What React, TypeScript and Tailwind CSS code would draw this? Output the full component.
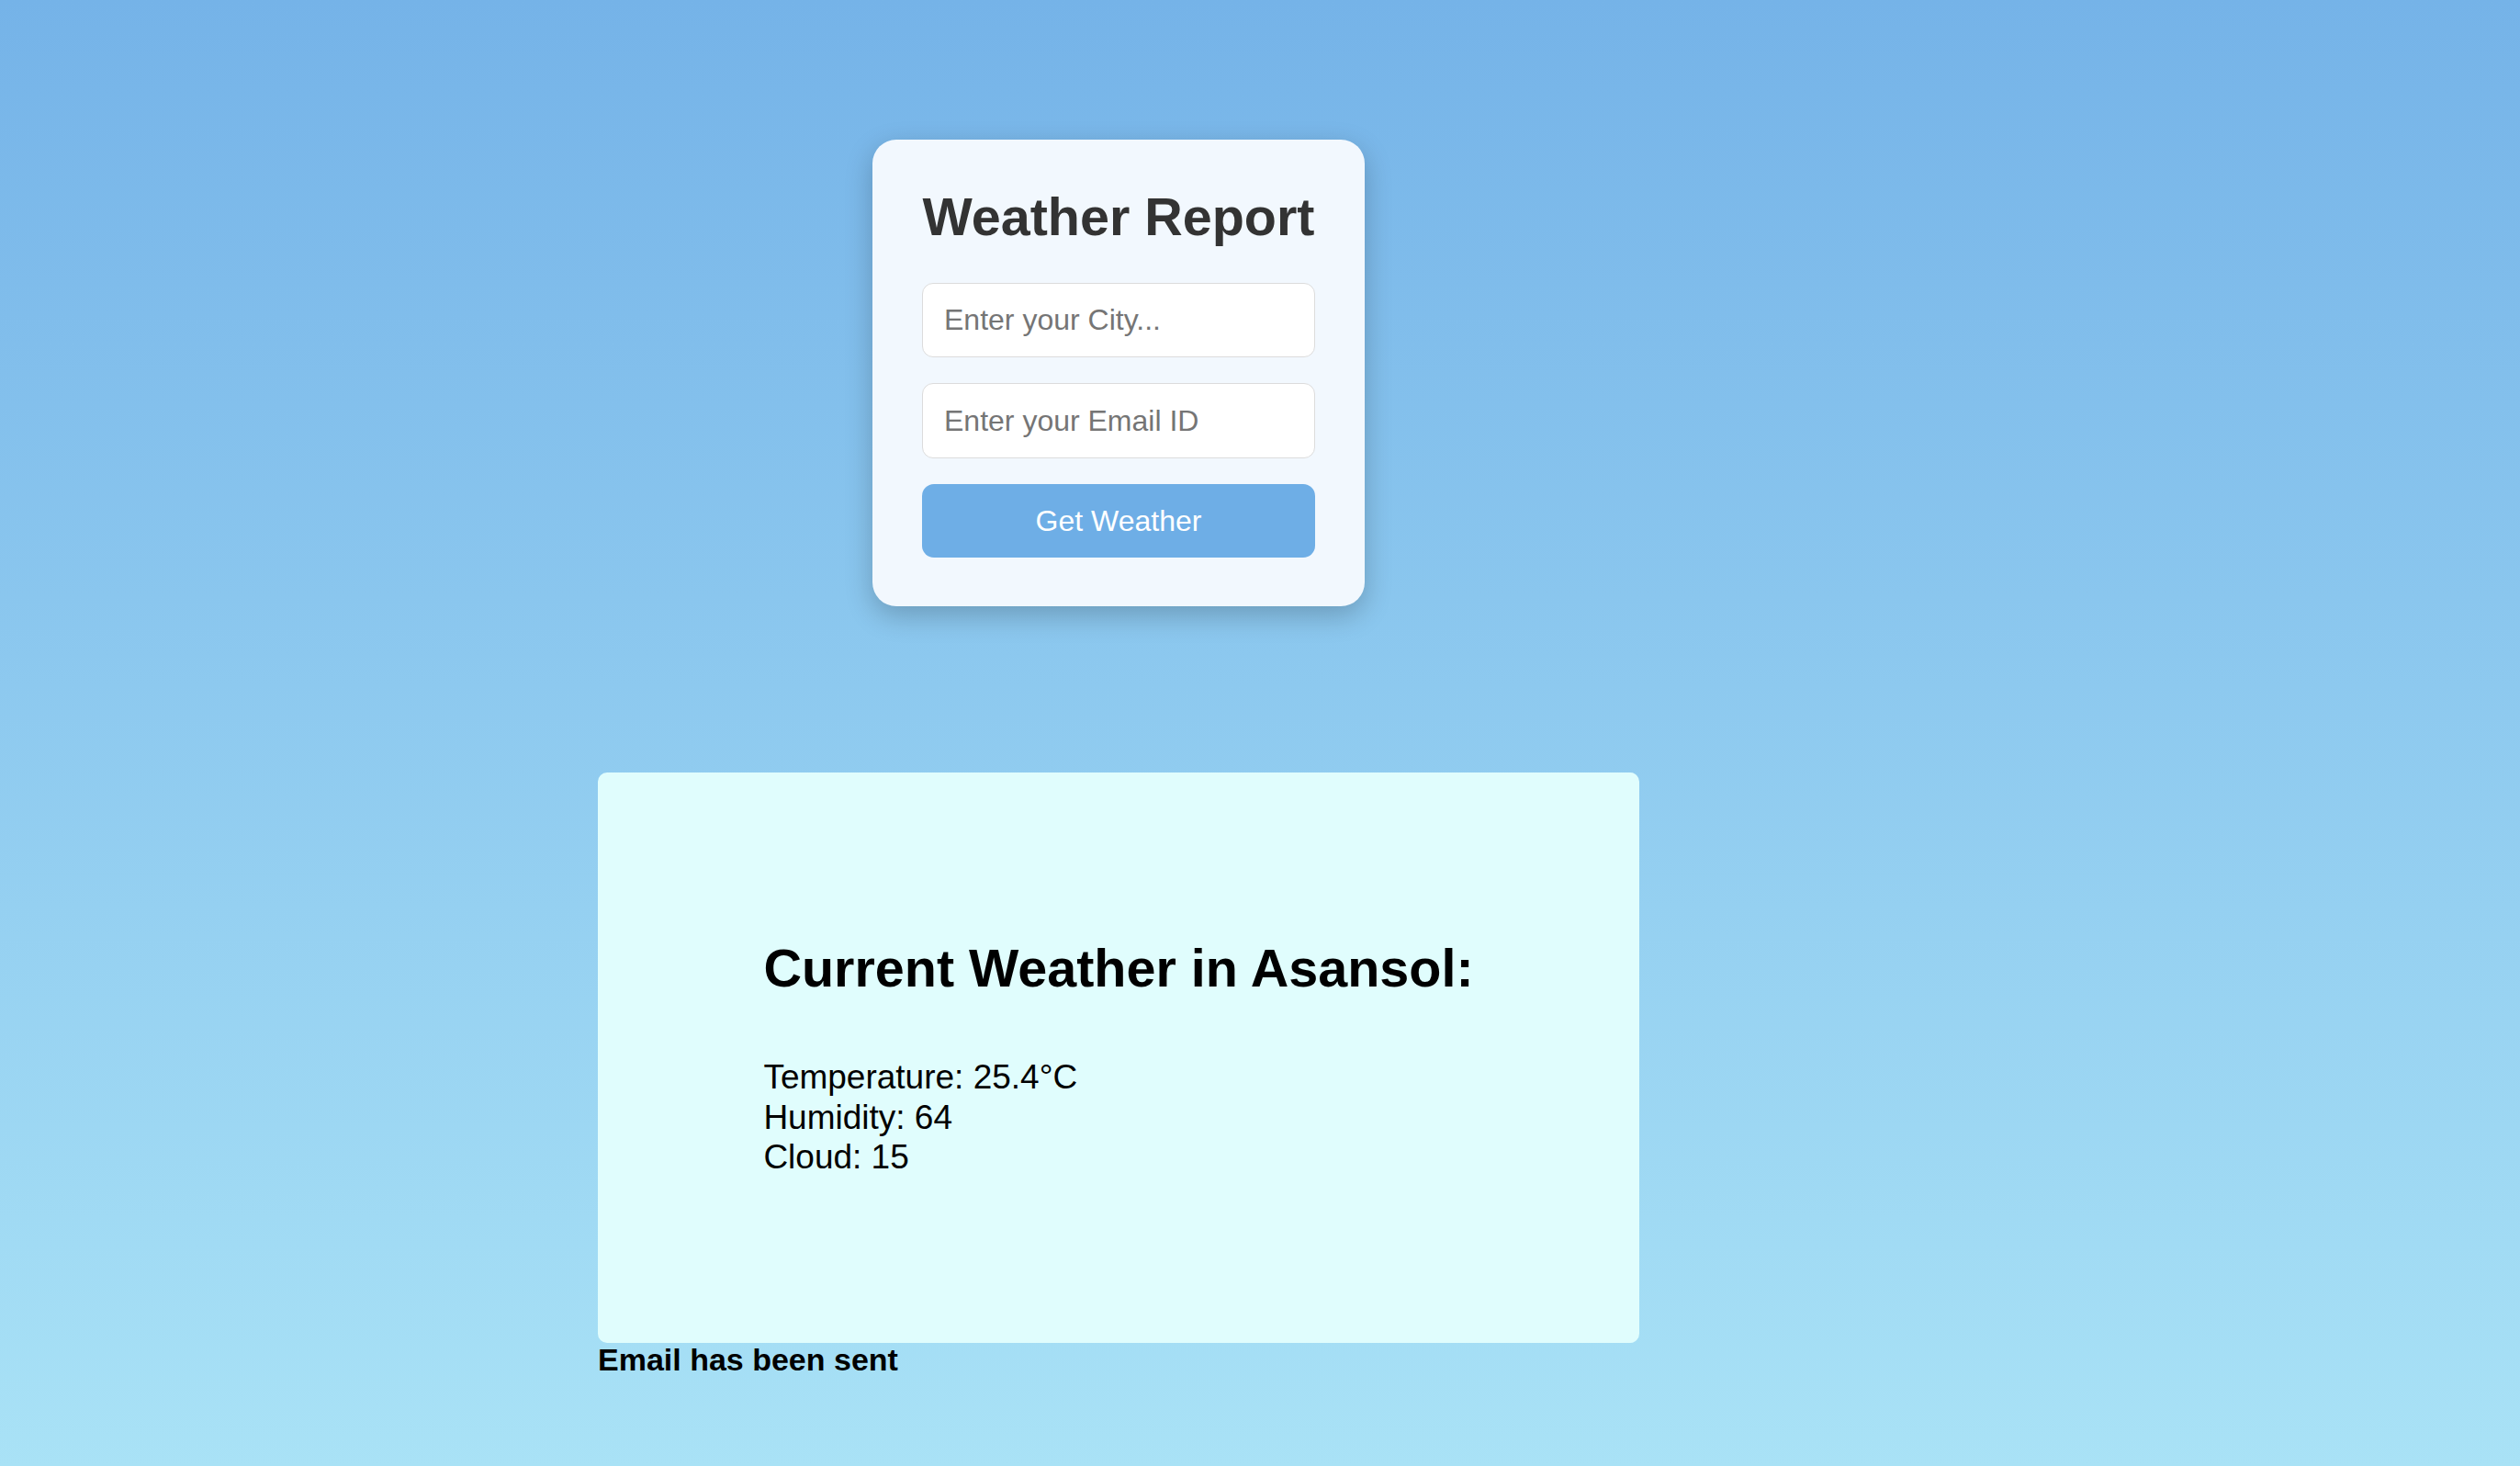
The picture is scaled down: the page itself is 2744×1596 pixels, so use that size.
export default function App() {
  return (
    <div className="min-h-screen w-full bg-gradient-to-b from-[#75b3e8] to-[#a9e2f6] font-['Liberation_Sans',Arial,sans-serif]">
      <div className="flex w-[2436px] flex-col items-center pt-[152px]">
        {/* Search card */}
        <div className="w-[536px] rounded-[26px] bg-[#f2f8fe] px-[54px] pt-[52px] pb-[53px] shadow-[0_10px_30px_rgba(0,0,0,0.22)]">
          <h1 className="-mx-[4px] whitespace-nowrap text-center text-[57.5px] leading-[65px] font-bold text-[#333]">
            Weather Report
          </h1>
          <div className="mt-[39px] flex flex-col gap-[28px]">
            <input
              className="h-[81px] w-full rounded-[12px] border border-[#dcdcdc] bg-white px-[23px] text-[32px] text-[#333] outline-none placeholder:text-[#757575]"
              placeholder="Enter your City..."
            />
            <input
              className="h-[82px] w-full rounded-[12px] border border-[#dcdcdc] bg-white px-[23px] text-[32px] text-[#333] outline-none placeholder:text-[#757575]"
              placeholder="Enter your Email ID"
            />
            <button className="h-[80px] w-full rounded-[13px] bg-[#6eaee6] text-[32px] text-white">
              Get Weather
            </button>
          </div>
        </div>

        {/* Result */}
        <div className="mt-[181px] w-[1134px]">
          <div className="flex h-[621px] items-center justify-center rounded-[10px] bg-[#e0fdfd]">
            <div>
              <h2 className="text-[57.5px] leading-[65.5px] font-bold text-black">
                Current Weather in Asansol:
              </h2>
              <div className="mt-[64px] text-[37px] leading-[43.5px] text-black">
                <p>Temperature: 25.4°C</p>
                <p>Humidity: 64</p>
                <p>Cloud: 15</p>
              </div>
            </div>
          </div>
          <p className="text-[34px] leading-[36px] font-bold text-black">Email has been sent</p>
        </div>
      </div>
    </div>
  );
}
